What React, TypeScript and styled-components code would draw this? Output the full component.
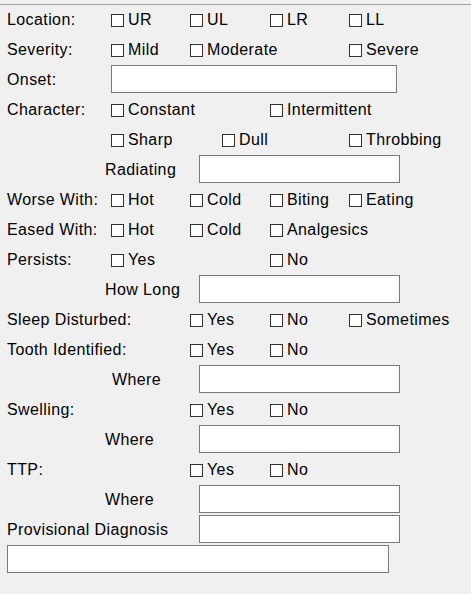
import styled, { createGlobalStyle } from "styled-components";

type Check = { text: string; col: number; offset?: number };

const GlobalStyle = createGlobalStyle`
  html, body {
    margin: 0;
    background: #f0f0f0;
  }
  body {
    font-family: "Liberation Sans", Arial, sans-serif;
    font-size: 16px;
    letter-spacing: 0.4px;
    color: #000;
  }
`;

function CheckItem({ text, col, offset = 0 }: Check) {
  return (
    <CheckLabel $col={col} $offset={offset}>
      <Box type="checkbox" />
      <span>{text}</span>
    </CheckLabel>
  );
}

function CheckRow({ label, checks }: { label: string; checks: Check[] }) {
  return (
    <Row>
      <Label>{label}</Label>
      {checks.map((c) => (
        <CheckItem key={c.text} {...c} />
      ))}
    </Row>
  );
}

function FieldRow({ label, indent = 105 }: { label: string; indent?: number }) {
  return (
    <SubRow>
      <SubLabel $indent={indent}>{label}</SubLabel>
      <TextBox $width={201} />
    </SubRow>
  );
}

export default function App() {
  return (
    <>
      <GlobalStyle />
      <Form>
        <CheckRow
          label="Location:"
          checks={[
            { text: "UR", col: 2 },
            { text: "UL", col: 3 },
            { text: "LR", col: 4 },
            { text: "LL", col: 5 },
          ]}
        />
        <CheckRow
          label="Severity:"
          checks={[
            { text: "Mild", col: 2 },
            { text: "Moderate", col: 3 },
            { text: "Severe", col: 5 },
          ]}
        />
        <Row>
          <Label>Onset:</Label>
          <TextBox $width={286} />
        </Row>
        <CheckRow
          label="Character:"
          checks={[
            { text: "Constant", col: 2 },
            { text: "Intermittent", col: 4 },
          ]}
        />
        <CheckRow
          label=""
          checks={[
            { text: "Sharp", col: 2 },
            { text: "Dull", col: 3, offset: 32 },
            { text: "Throbbing", col: 5 },
          ]}
        />
        <FieldRow label="Radiating" />
        <CheckRow
          label="Worse With:"
          checks={[
            { text: "Hot", col: 2 },
            { text: "Cold", col: 3 },
            { text: "Biting", col: 4 },
            { text: "Eating", col: 5 },
          ]}
        />
        <CheckRow
          label="Eased With:"
          checks={[
            { text: "Hot", col: 2 },
            { text: "Cold", col: 3 },
            { text: "Analgesics", col: 4 },
          ]}
        />
        <CheckRow
          label="Persists:"
          checks={[
            { text: "Yes", col: 2 },
            { text: "No", col: 4 },
          ]}
        />
        <FieldRow label="How Long" />
        <CheckRow
          label="Sleep Disturbed:"
          checks={[
            { text: "Yes", col: 3 },
            { text: "No", col: 4 },
            { text: "Sometimes", col: 5 },
          ]}
        />
        <CheckRow
          label="Tooth Identified:"
          checks={[
            { text: "Yes", col: 3 },
            { text: "No", col: 4 },
          ]}
        />
        <FieldRow label="Where" indent={112} />
        <CheckRow
          label="Swelling:"
          checks={[
            { text: "Yes", col: 3 },
            { text: "No", col: 4 },
          ]}
        />
        <FieldRow label="Where" />
        <CheckRow
          label="TTP:"
          checks={[
            { text: "Yes", col: 3 },
            { text: "No", col: 4 },
          ]}
        />
        <FieldRow label="Where" />
        <FieldRow label="Provisional Diagnosis" indent={7} />
        <SubRow>
          <TextBox $width={382} $left={7} />
        </SubRow>
      </Form>
    </>
  );
}

const Form = styled.div`
  margin-top: 4px;
  border-top: 1px solid #a0a0a0;
  width: 471px;
  min-height: 589px;
  box-sizing: border-box;
`;

const Row = styled.div`
  display: grid;
  grid-template-columns: 111px 79px 80px 79px 1fr;
  height: 30px;
  align-items: start;
`;

const SubRow = styled.div`
  display: flex;
  align-items: flex-start;
  height: 30px;
`;

const Label = styled.div`
  grid-column: 1;
  grid-row: 1;
  padding: 1px 0 0 7px;
  line-height: 27px;
  white-space: nowrap;
`;

const SubLabel = styled.div<{ $indent: number }>`
  width: 199px;
  box-sizing: border-box;
  padding: 1px 0 0 ${(p) => p.$indent}px;
  line-height: 27px;
  white-space: nowrap;
`;

const CheckLabel = styled.label<{ $col: number; $offset: number }>`
  grid-column: ${(p) => p.$col};
  grid-row: 1;
  display: flex;
  align-items: flex-start;
  margin-left: ${(p) => p.$offset}px;
  padding-top: 1px;
  line-height: 27px;
  white-space: nowrap;
`;

const Box = styled.input`
  appearance: none;
  width: 13px;
  height: 13px;
  margin: 8px 4px 0 0;
  box-sizing: border-box;
  border: 1px solid #333;
  background: #fff;
  flex: none;
`;

const TextBox = styled.input<{ $width: number; $left?: number }>`
  grid-column: 2 / 6;
  justify-self: start;
  width: ${(p) => p.$width}px;
  height: 28px;
  margin: 0 0 0 ${(p) => p.$left ?? 0}px;
  box-sizing: border-box;
  border: 1px solid #7a7a7a;
  background: #fff;
  padding: 0 4px;
  font: inherit;
  outline: none;
`;
